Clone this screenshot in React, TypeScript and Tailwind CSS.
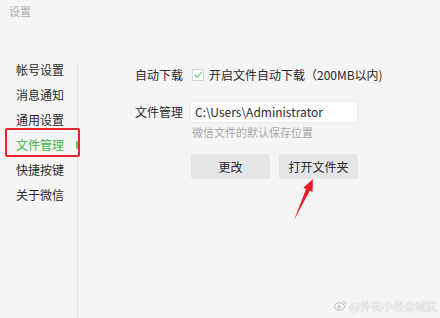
import { Check } from 'lucide-react'

const menu = ['帐号设置', '消息通知', '通用设置', '文件管理', '快捷按键', '关于微信']

function Arrow() {
  return (
    <svg className="absolute left-[285px] top-[175px]" width="35" height="50" viewBox="0 0 35 50">
      <polygon
        points="9,45 21.1,14.1 18.4,12.8 28,4 27.5,17 24.8,15.7"
        fill="#ec1c24"
      />
    </svg>
  )
}

function Watermark() {
  return (
    <div className="absolute bottom-[4px] right-[3px] flex items-center gap-[3px] text-[11px] text-[#f6f6f6] [text-shadow:0_0_1px_#a5a5a5]">
      <svg width="13" height="11" viewBox="0 0 13 11">
        <ellipse cx="5.5" cy="6.5" rx="5" ry="3.8" fill="#f6f6f6" stroke="#a8a8a8" strokeWidth="0.8" />
        <circle cx="5" cy="7" r="1.4" fill="none" stroke="#a8a8a8" strokeWidth="0.7" />
        <path d="M9 1.5 a3 3 0 0 1 3 3" fill="none" stroke="#a8a8a8" strokeWidth="0.8" />
      </svg>
      <span>@外卖小哥金城武</span>
    </div>
  )
}

export default function App() {
  return (
    <div className="relative flex h-[318px] w-[440px] flex-col overflow-hidden bg-[#f5f5f5] font-['Noto_Sans_CJK_SC',sans-serif] text-[#2a2a2a]">
      <div className="h-[22px] pl-[9px] pt-[3px] text-[11px] leading-[16px] text-[#b0b0b0]">设置</div>

      <div className="mt-[35px] flex flex-1">
        <div className="flex w-[77px] flex-col">
          {menu.map((item) => (
            <div
              key={item}
              className={`flex h-[25px] items-center pl-[16px] text-[12px] ${
                item === '文件管理' ? 'text-[#3ab54a]' : 'text-[#2a2a2a]'
              }`}
            >
              {item}
            </div>
          ))}
        </div>
        <div className="relative mt-[8px] w-px bg-[#e4e4e4]">
          <div className="absolute left-[-1px] top-[76px] h-[8px] w-[2px] rounded-full bg-[#5ccc5c]" />
        </div>

        <div className="flex flex-col pl-[57px] pt-[6px]">
          <div className="flex h-[24px] items-center">
            <div className="w-[55px] text-[12px]">自动下载</div>
            <div className="flex items-center gap-[5px] pl-[2px]">
              <div className="flex h-[12px] w-[12px] items-center justify-center border border-[#d6d6d6] bg-white">
                <Check size={10} strokeWidth={2.5} className="text-[#46c05a]" />
              </div>
              <span className="text-[12px]">开启文件自动下载（200MB以内)</span>
            </div>
          </div>

          <div className="mt-[14px] flex items-center">
            <div className="w-[55px] text-[12px]">文件管理</div>
            <div className="flex h-[22px] w-[168px] items-center border border-[#ececec] bg-white pl-[4px] text-[12px]">
              C:\Users\Administrator
            </div>
          </div>
          <div className="ml-[57px] mt-[1px] text-[11px] leading-[16px] text-[#a8a8a8]">微信文件的默认保存位置</div>

          <div className="ml-[56px] mt-[14px] flex gap-[9px]">
            <button type="button" className="h-[25px] w-[79px] rounded-[2px] bg-[#e6e6e6] text-[12px]">更改</button>
            <button type="button" className="h-[25px] w-[79px] rounded-[2px] bg-[#e6e6e6] text-[12px]">打开文件夹</button>
          </div>
        </div>
      </div>

      <div className="absolute left-[5px] top-[128px] h-[29px] w-[75px] rounded-[2px] border-2 border-[#e6262b]" />
      <Arrow />
      <Watermark />
    </div>
  )
}
